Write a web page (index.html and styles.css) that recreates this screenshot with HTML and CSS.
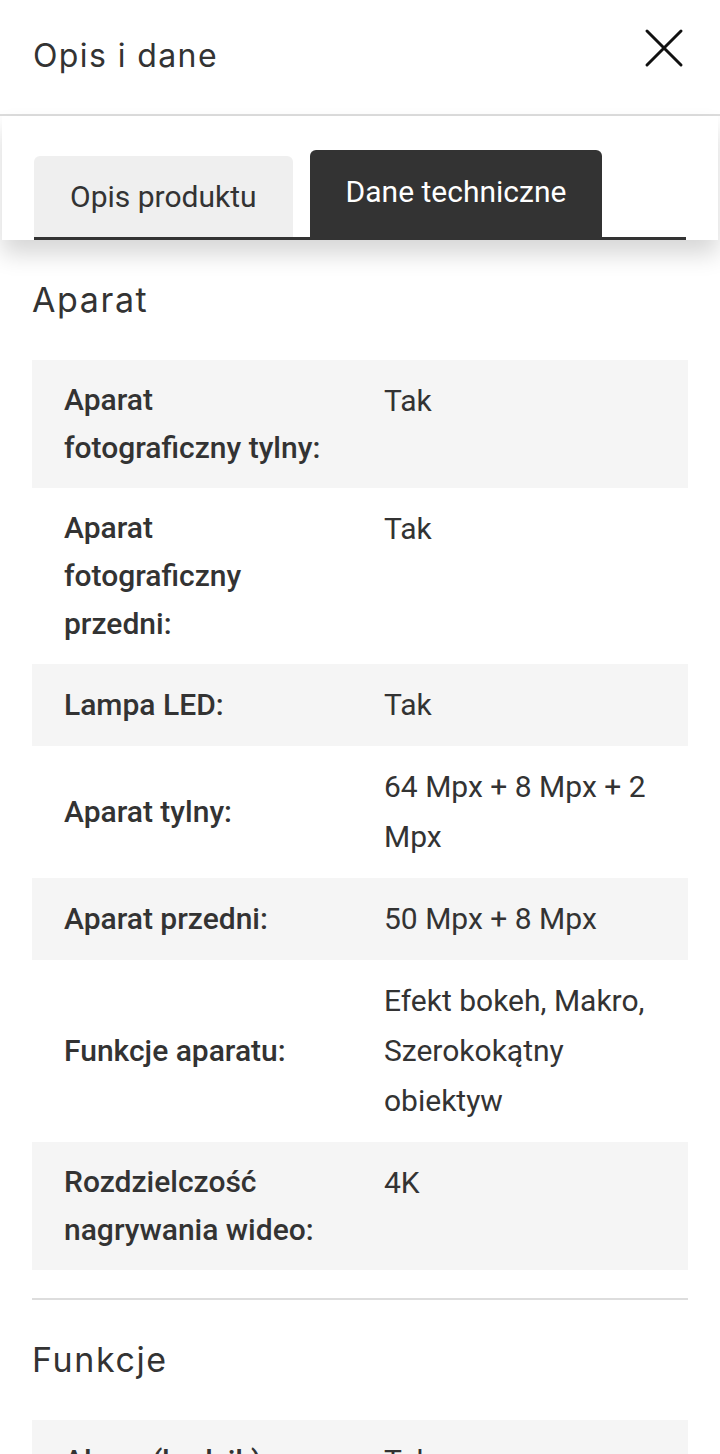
FILE: index.html
```html
<!DOCTYPE html>
<html lang="pl">
<head>
<meta charset="utf-8">
<title>Opis i dane</title>
<link rel="stylesheet" href="styles.css">
</head>
<body>
<header class="top">
  <h1 class="title">Opis i dane</h1>
  <button class="close" aria-label="Zamknij">
    <svg width="40" height="40" viewBox="0 0 40 40"><path d="M3 3 L37 37 M37 3 L3 37" stroke="#111" stroke-width="3" stroke-linecap="round" fill="none"/></svg>
  </button>
</header>
<nav class="tabs">
  <div class="tablist">
    <div class="tab">Opis produktu</div>
    <div class="tab active">Dane techniczne</div>
  </div>
</nav>
<main class="content">
  <section class="group">
    <h2 class="group-title">Aparat</h2>
    <div class="specs">
      <div class="row"><div class="label">Aparat fotograficzny tylny:</div><div class="value">Tak</div></div>
      <div class="row"><div class="label">Aparat fotograficzny przedni:</div><div class="value">Tak</div></div>
      <div class="row"><div class="label">Lampa LED:</div><div class="value">Tak</div></div>
      <div class="row"><div class="label">Aparat tylny:</div><div class="value">64 Mpx + 8 Mpx + 2 Mpx</div></div>
      <div class="row"><div class="label">Aparat przedni:</div><div class="value">50 Mpx + 8 Mpx</div></div>
      <div class="row"><div class="label">Funkcje aparatu:</div><div class="value">Efekt bokeh, Makro, Szerokokątny obiektyw</div></div>
      <div class="row"><div class="label">Rozdzielczość nagrywania wideo:</div><div class="value">4K</div></div>
    </div>
  </section>
  <section class="group">
    <h2 class="group-title">Funkcje</h2>
    <div class="specs">
      <div class="row"><div class="label">Alarm (budzik):</div><div class="value">Tak</div></div>
      <div class="row"><div class="label">Kalendarz:</div><div class="value">Tak</div></div>
    </div>
  </section>
</main>
</body>
</html>
```
FILE: styles.css
```css
* { box-sizing: border-box; }
html, body { margin: 0; padding: 0; background: #fff; }
body {
  width: 720px;
  height: 1454px;
  overflow: hidden;
  color: #333;
  font-family: Roboto, "Liberation Sans", sans-serif;
}
.top {
  height: 116px;
  border-bottom: 2px solid #ddd;
  display: flex;
  align-items: center;
  justify-content: space-between;
  padding: 0 36px 0 33px;
}
.title {
  margin: 0;
  font-family: Inter, "Open Sans", sans-serif;
  font-weight: 400;
  font-size: 32px;
  line-height: 40px;
  color: #333;
  letter-spacing: 1.4px;
  transform: translateY(-1px);
}
.close {
  border: 0;
  background: none;
  padding: 0;
  width: 40px;
  height: 40px;
  display: block;
  transform: translateY(-9px);
}
.close svg { display: block; }
.tabs {
  position: relative;
  z-index: 2;
  margin: 0 2px;
  background: #fff;
  padding: 34px 32px 0 32px;
  box-shadow: 0 14px 22px rgba(0, 0, 0, 0.16);
}
.tablist {
  display: flex;
  align-items: flex-end;
  gap: 17px;
  border-bottom: 3px solid #333;
}
.tab {
  height: 81px;
  padding: 0 36px;
  display: flex;
  align-items: center;
  background: #efefef;
  border-radius: 6px 6px 0 0;
  font-size: 30px;
  color: #333;
}
.tab.active {
  height: 87px;
  background: #333;
  color: #fff;
  padding-bottom: 4px;
}
.content { padding: 0 32px; }
.group {
  padding-bottom: 28px;
  border-bottom: 2px solid #ddd;
}
.group-title {
  margin: 40px 0;
  font-family: Inter, "Open Sans", sans-serif;
  font-weight: 400;
  font-size: 34px;
  line-height: 40px;
  color: #333;
  letter-spacing: 1.6px;
}
.specs { width: 656px; }
.row {
  display: grid;
  grid-template-columns: 320px 1fr;
  font-size: 30px;
  color: #333;
}
.row:nth-child(odd) { background: #f5f5f5; }
.label {
  padding: 16px 24px 16px 32px;
  font-weight: 500;
  line-height: 48px;
  align-self: center;
}
.value {
  padding: 16px 32px;
  line-height: 50px;
  align-self: start;
}
```
